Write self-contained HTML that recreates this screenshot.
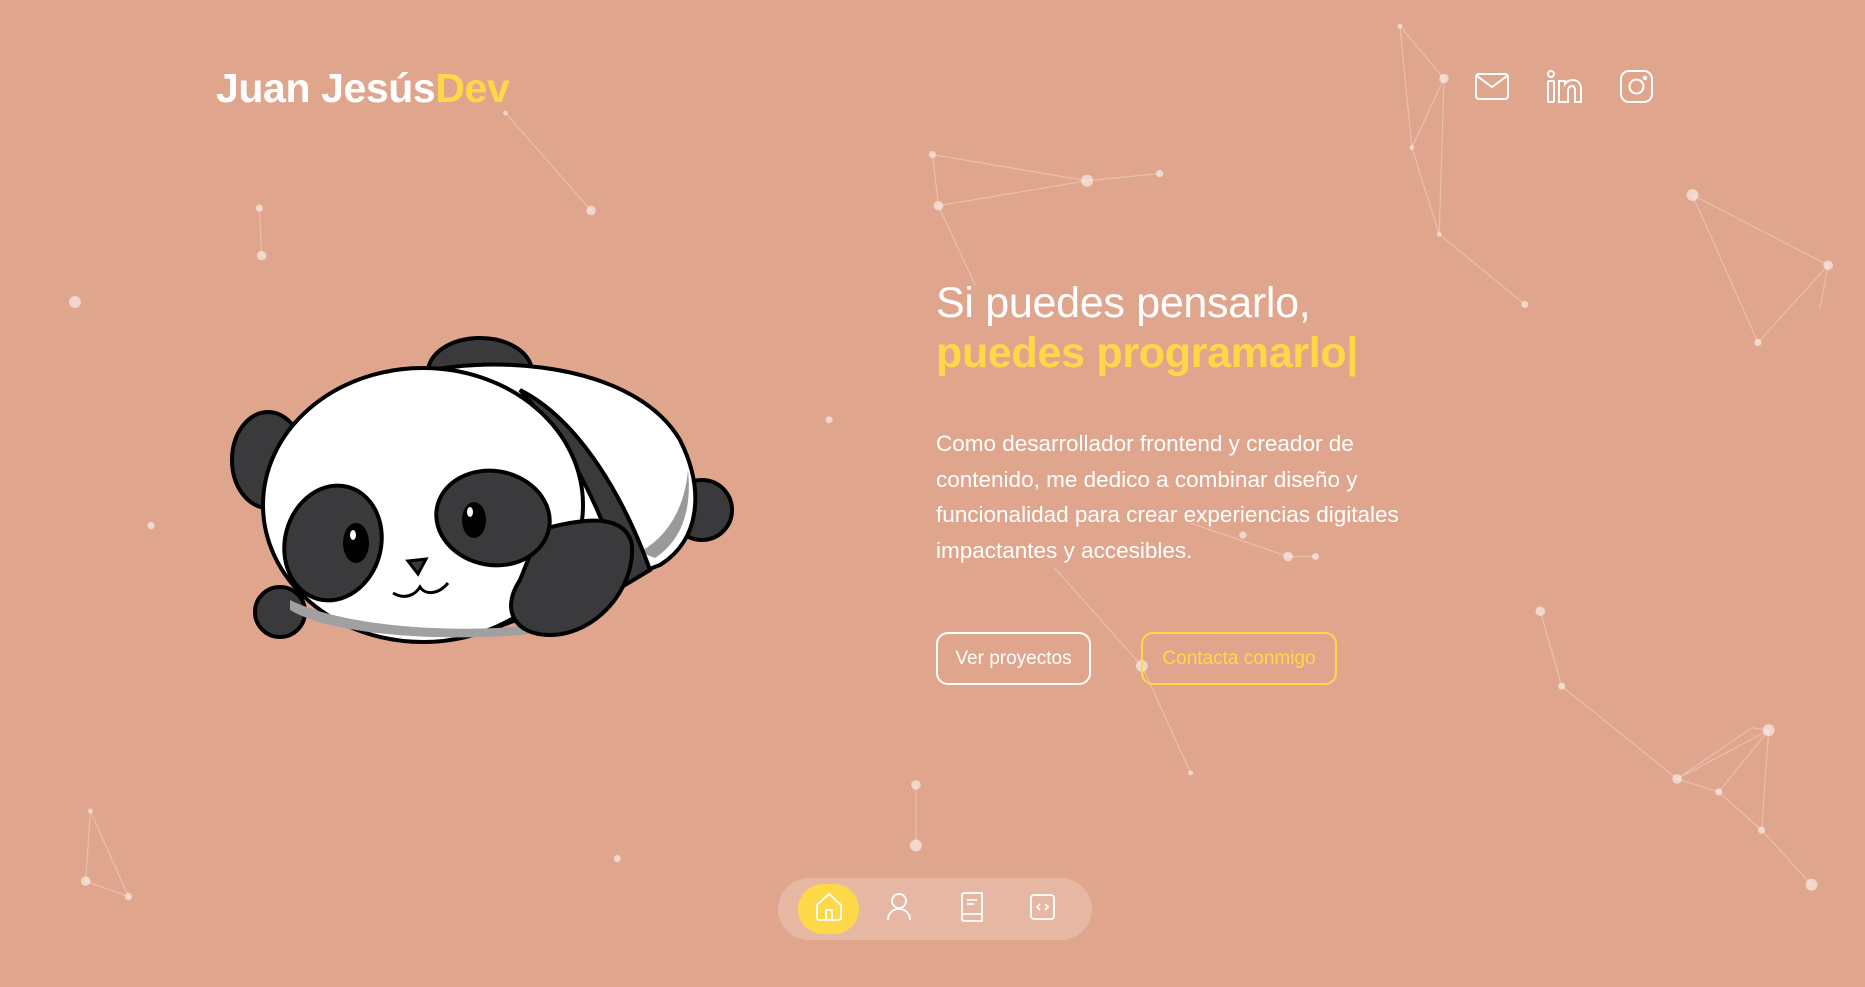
<!DOCTYPE html>
<html><head><meta charset="utf-8"><style>
*{margin:0;padding:0;box-sizing:border-box}
body{width:1865px;height:987px;overflow:hidden;background:#e0a58d;font-family:"Liberation Sans",sans-serif;position:relative;color:#fff}
.bg{position:absolute;left:0;top:0;width:1865px;height:987px}
.logo{position:absolute;left:216px;top:65px;font-size:41px;font-weight:bold;letter-spacing:-0.4px}
.logo span{color:#ffd84a}
.icons svg{position:absolute}
h1{position:absolute;left:936px;top:278px;font-size:43px;font-weight:normal;line-height:50px;letter-spacing:-0.3px}
h1 b{color:#ffd84a}
p{position:absolute;left:936px;top:426px;width:520px;font-size:22.5px;line-height:35.5px}
.btn{position:absolute;top:632px;height:53px;border-radius:12px;font-size:19px;display:flex;align-items:center;justify-content:center}
.b1{left:936px;width:155px;border:2px solid #fff;color:#fff}
.b2{left:1141px;width:196px;border:2px solid #ffd84a;color:#ffd84a}
.nav{position:absolute;left:778px;top:878px;width:314px;height:62px;border-radius:31px;background:rgba(255,255,255,.2)}
.home{position:absolute;left:20px;top:6px;width:61px;height:50px;border-radius:25px;background:#ffd84a}
.nav svg{position:absolute}
</style></head><body>
<svg class="bg" viewBox="0 0 1568 830" preserveAspectRatio="none">
<g stroke="rgba(255,255,255,.3)" stroke-width="1" fill="none">
<path d="M425 95L497 177M218 175L220 215M1177 22L1214 66L1187 124L1177 22M1187 124L1210 197L1282 256M1214 66L1210 197M784 130L789 173L914 152L975 146M784 130L914 152M1423 164L1537 223L1478 288L1423 164M1537 223L1530 260M1295 514L1313 577L1410 655L1487 614L1481 698L1523 744M1410 655L1445 666L1487 614L1473 612L1410 655M1445 666L1481 698M770 660L770 711M76 682L72 741L108 754L76 682M887 478L960 560L1001 650M1001 440L1083 468L1106 468M789 173L820 240"/>
</g>
<g fill="rgba(255,255,255,.55)">
<circle cx="425" cy="95" r="2"/><circle cx="497" cy="177" r="4"/><circle cx="218" cy="175" r="3"/><circle cx="220" cy="215" r="4"/><circle cx="63" cy="254" r="5"/><circle cx="127" cy="442" r="3"/><circle cx="697" cy="353" r="3"/><circle cx="1177" cy="22" r="2"/><circle cx="1214" cy="66" r="4"/><circle cx="1187" cy="124" r="2"/><circle cx="1210" cy="197" r="2"/><circle cx="1282" cy="256" r="3"/><circle cx="784" cy="130" r="3"/><circle cx="789" cy="173" r="4"/><circle cx="914" cy="152" r="5"/><circle cx="975" cy="146" r="3"/><circle cx="1423" cy="164" r="5"/><circle cx="1537" cy="223" r="4"/><circle cx="1478" cy="288" r="3"/><circle cx="1295" cy="514" r="4"/><circle cx="1313" cy="577" r="3"/><circle cx="1410" cy="655" r="4"/><circle cx="1487" cy="614" r="5"/><circle cx="1481" cy="698" r="3"/><circle cx="1523" cy="744" r="5"/><circle cx="1445" cy="666" r="3"/><circle cx="770" cy="660" r="4"/><circle cx="770" cy="711" r="5"/><circle cx="519" cy="722" r="3"/><circle cx="76" cy="682" r="2"/><circle cx="72" cy="741" r="4"/><circle cx="108" cy="754" r="3"/><circle cx="960" cy="560" r="5"/><circle cx="1083" cy="468" r="4"/><circle cx="1106" cy="468" r="3"/><circle cx="1045" cy="450" r="3"/><circle cx="1001" cy="650" r="2"/>
</g></svg>
<div class="logo">Juan Jesús<span>Dev</span></div>
<div class="icons">
<svg style="left:1474px;top:72px" width="36" height="29" viewBox="0 0 36 29" fill="none" stroke="#fff" stroke-width="2"><rect x="2" y="2" width="32" height="25" rx="3"/><path d="M3 4l15 11 15-11"/></svg>
<svg style="left:1546px;top:70px" width="38" height="34" viewBox="0 0 38 34" fill="none" stroke="#fff" stroke-width="2"><circle cx="5" cy="4" r="3"/><rect x="2" y="11" width="6" height="21" rx="1"/><path d="M13 32V11h6v3c2-3 5-4 8-4 5 0 8 4 8 9v13h-6V20c0-2-1-4-3-4s-4 2-4 4v12z"/></svg>
<svg style="left:1619px;top:69px" width="35" height="35" viewBox="0 0 35 35" fill="none" stroke="#fff" stroke-width="2"><rect x="2" y="2" width="31" height="31" rx="8"/><circle cx="17.5" cy="17.5" r="7"/><circle cx="26" cy="9" r="1.2"/></svg>
</div>
<svg style="position:absolute;left:230px;top:330px" width="510" height="330" viewBox="0 0 510 330" stroke="#000" stroke-width="4">
<ellipse cx="472" cy="180" rx="30" ry="30" fill="#3a3a3c"/>
<ellipse cx="50" cy="282" rx="25" ry="25" fill="#3a3a3c"/>
<ellipse cx="38" cy="130" rx="36" ry="48" fill="#3a3a3c"/>
<ellipse cx="250" cy="42" rx="52" ry="34" fill="#3a3a3c"/>
<path d="M150 55C230 20 400 25 450 110C475 160 470 210 430 235L260 300Z" fill="#fff"/>
<path d="M458 140C462 180 452 210 425 228L410 222C440 205 455 175 458 140Z" fill="#9a9a9c" stroke="none"/>
<path d="M290 60C350 90 395 170 420 240L395 255C375 190 345 120 290 60Z" fill="#3a3a3c"/>
<ellipse cx="193" cy="175" rx="160" ry="137" fill="#fff"/>
<path d="M60 270C120 300 250 305 320 292L315 302C250 312 110 310 60 280Z" fill="#a0a0a2" stroke="none"/>
<path d="M310 200C345 190 395 180 402 215C405 260 365 305 320 305C285 305 270 280 290 250Z" fill="#3a3a3c"/>
<ellipse cx="103" cy="213" rx="48" ry="58" fill="#3a3a3c" transform="rotate(15 103 213)"/>
<ellipse cx="263" cy="188" rx="57" ry="47" fill="#3a3a3c" transform="rotate(10 263 188)"/>
<ellipse cx="126" cy="213" rx="13" ry="20" fill="#000" stroke="none"/>
<ellipse cx="244" cy="190" rx="12" ry="18" fill="#000" stroke="none"/>
<ellipse cx="123" cy="205" rx="3" ry="5" fill="#fff" stroke="none"/>
<ellipse cx="240" cy="182" rx="3" ry="5" fill="#fff" stroke="none"/>
<path d="M178 231L196 229L188 244Z" fill="#3a3a3c" stroke-width="3"/>
<path d="M163 263C175 270 185 265 190 257C195 265 208 265 218 253" fill="none" stroke-width="3"/>
</svg>
<h1>Si puedes pensarlo,<br><b>puedes programarlo|</b></h1>
<p>Como desarrollador frontend y creador de contenido, me dedico a combinar diseño y funcionalidad para crear experiencias digitales impactantes y accesibles.</p>
<div class="btn b1">Ver proyectos</div>
<div class="btn b2">Contacta conmigo</div>
<div class="nav"><div class="home"></div>
<svg style="left:37px;top:14px" width="28" height="30" viewBox="0 0 28 30" fill="none" stroke="#fff" stroke-width="1.8"><path d="M2 13L14 2l12 11v13a2 2 0 0 1-2 2H4a2 2 0 0 1-2-2z"/><path d="M11 28V18h6v10"/></svg>
<svg style="left:108px;top:14px" width="26" height="30" viewBox="0 0 26 30" fill="none" stroke="#fff" stroke-width="1.8"><circle cx="13" cy="9" r="7"/><path d="M2 28c0-7 5-11 11-11s11 4 11 11"/></svg>
<svg style="left:182px;top:13px" width="24" height="31" viewBox="0 0 24 31" fill="none" stroke="#fff" stroke-width="1.8"><path d="M2 25V4a2 2 0 0 1 2-2h18v28H4a2 2 0 0 1-2-2v-3a2 2 0 0 1 2-2h18"/><path d="M7 9h10M7 13h7"/></svg>
<svg style="left:251px;top:15px" width="27" height="28" viewBox="0 0 27 28" fill="none" stroke="#fff" stroke-width="1.8"><rect x="2" y="2" width="23" height="24" rx="3"/><path d="M11 11l-3 3 3 3M16 11l3 3-3 3"/></svg>
</div>
</body></html>
